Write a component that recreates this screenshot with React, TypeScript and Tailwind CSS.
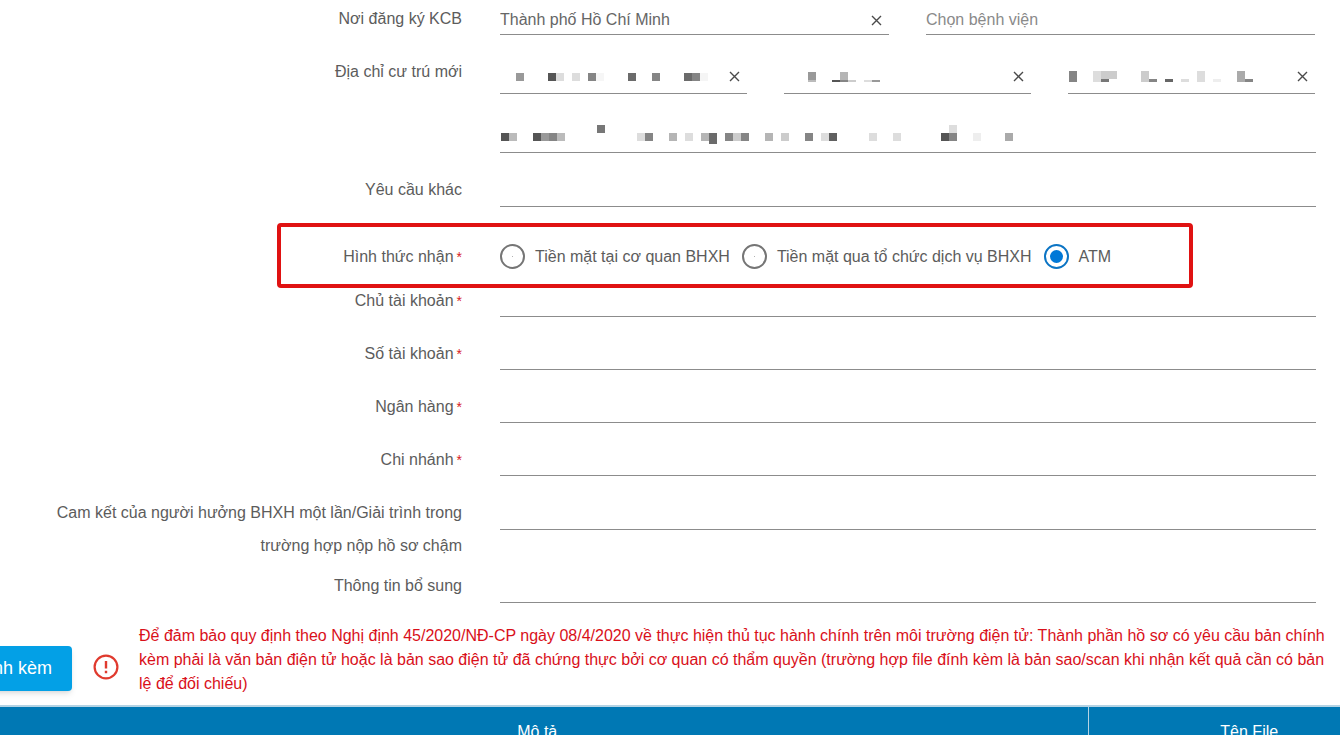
import React, { useState } from "react";

type Cell = [x: number, y: number, height: number, color: string];

// masked personal data, one block per cell
const provinceMask: Cell[] = [
  [16, 18, 8, "#999"],
  [48, 18, 8, "#555"],
  [56, 18, 8, "#ddd"],
  [72, 18, 8, "#ddd"],
  [88, 18, 8, "#858585"],
  [96, 18, 8, "#f6f6f6"],
  [128, 18, 8, "#6b6b6b"],
  [152, 18, 8, "#858585"],
  [184, 18, 8, "#6b6b6b"],
  [192, 18, 8, "#858585"],
  [200, 18, 8, "#f5f5f5"],
];

const districtMask: Cell[] = [
  [24, 17, 8, "#999"],
  [24, 25, 2, "#bbb"],
  [56, 17, 8, "#b5b5b5"],
  [48, 25, 2, "#555"],
  [56, 25, 2, "#858585"],
  [64, 25, 2, "#ccc"],
  [80, 25, 2, "#ddd"],
  [88, 25, 2, "#999"],
];

const wardMask: Cell[] = [
  [1, 16, 11, "#858585"],
  [25, 16, 11, "#ddd"],
  [33, 16, 8, "#ccc"],
  [33, 24, 3, "#777"],
  [41, 16, 8, "#ccc"],
  [73, 16, 11, "#ccc"],
  [81, 24, 3, "#858585"],
  [97, 24, 3, "#666"],
  [113, 24, 3, "#ddd"],
  [129, 16, 11, "#ddd"],
  [145, 24, 3, "#eee"],
  [169, 16, 11, "#aaa"],
  [177, 24, 3, "#858585"],
];

const streetMask: Cell[] = [
  [1, 19, 8, "#555"],
  [9, 19, 8, "#bbb"],
  [33, 19, 8, "#555"],
  [41, 19, 8, "#999"],
  [49, 19, 8, "#858585"],
  [57, 19, 8, "#bbb"],
  [97, 11, 8, "#777"],
  [137, 19, 8, "#ddd"],
  [145, 19, 8, "#858585"],
  [169, 19, 8, "#b5b5b5"],
  [185, 19, 8, "#ddd"],
  [201, 19, 8, "#b5b5b5"],
  [209, 19, 11, "#6b6b6b"],
  [225, 19, 8, "#858585"],
  [233, 19, 8, "#ccc"],
  [241, 19, 8, "#858585"],
  [265, 19, 8, "#b5b5b5"],
  [281, 19, 8, "#ccc"],
  [305, 19, 8, "#858585"],
  [321, 19, 8, "#ddd"],
  [329, 19, 8, "#606060"],
  [369, 19, 8, "#ddd"],
  [393, 19, 8, "#ddd"],
  [441, 19, 8, "#555"],
  [449, 19, 8, "#858585"],
  [449, 11, 8, "#ddd"],
  [473, 19, 8, "#eee"],
  [505, 19, 8, "#aaa"],
];

const paymentMethods = [
  { id: "cash-office", label: "Tiền mặt tại cơ quan BHXH" },
  { id: "cash-service", label: "Tiền mặt qua tổ chức dịch vụ BHXH" },
  { id: "atm", label: "ATM" },
];

const Mask = ({ cells }: { cells: Cell[] }) => (
  <svg
    className="pointer-events-none absolute top-0 left-0"
    width="520"
    height="38"
    shapeRendering="crispEdges"
    aria-hidden="true"
  >
    {cells.map(([x, y, height, color]) => (
      <rect key={`${x}-${y}`} x={x} y={y} width="8" height={height} fill={color} />
    ))}
  </svg>
);

const ClearButton = () => (
  <button
    type="button"
    aria-label="Xóa"
    className="flex w-[26px] shrink-0 cursor-pointer items-center justify-center pt-1"
  >
    <svg width="11" height="11" viewBox="0 0 11 11" fill="none">
      <path d="M1 1L10 10M10 1L1 10" stroke="#4a4a4a" strokeWidth="1.4" />
    </svg>
  </button>
);

interface FieldProps {
  id: string;
  name?: string;
  value?: string;
  placeholder?: string;
  clearable?: boolean;
  mask?: Cell[];
  className?: string;
}

const Field = ({
  id,
  name,
  value,
  placeholder,
  clearable,
  mask,
  className = "h-[33px]",
}: FieldProps) => (
  <div className={`relative flex min-w-0 border-b border-[#8c8c8c] ${className}`}>
    <input
      id={id}
      type="text"
      aria-label={name}
      defaultValue={value}
      placeholder={placeholder}
      className="w-full min-w-0 bg-transparent pt-1 text-[#666] outline-none placeholder:text-[#8a8a8a]"
    />
    {mask && <Mask cells={mask} />}
    {clearable && <ClearButton />}
  </div>
);

interface RowProps {
  label: string;
  htmlFor?: string;
  required?: boolean;
  className?: string;
  children: React.ReactNode;
}

const Row = ({ label, htmlFor, required, className = "mt-5", children }: RowProps) => (
  <div
    className={`grid grid-cols-[minmax(0,462fr)_minmax(0,816fr)] items-start gap-x-[38px] pr-6 ${className}`}
  >
    <label
      id={htmlFor ? undefined : "payment-label"}
      htmlFor={htmlFor}
      className="pl-12 text-right leading-[33px]"
    >
      {label}
      {required && <span className="ml-[3px] text-sm text-[#d8201c]">*</span>}
    </label>
    {children}
  </div>
);

const PaymentOptions = () => {
  const [method, setMethod] = useState("atm");

  return (
    <div
      role="radiogroup"
      aria-labelledby="payment-label"
      className="flex h-[33px] items-center gap-3 whitespace-nowrap"
    >
      {paymentMethods.map((item) => (
        <label key={item.id} className="flex cursor-pointer items-center gap-[10px]">
          <input
            type="radio"
            name="payment"
            value={item.id}
            checked={method === item.id}
            onChange={() => setMethod(item.id)}
            className="grid size-[25px] shrink-0 appearance-none place-content-center rounded-full border-2 border-[#757575] before:size-px before:rounded-full before:bg-[#999] checked:border-[#0b74c4] checked:before:size-[13px] checked:before:bg-[#0078d7]"
          />
          {item.label}
        </label>
      ))}
    </div>
  );
};

const Notice = () => (
  <div className="flex items-start overflow-hidden pt-[21px] pb-[9px]">
    <div className="flex w-[139px] shrink-0 items-center pt-[22px]">
      <div className="flex w-[72px] justify-end">
        <button
          type="button"
          className="h-[45px] shrink-0 cursor-pointer rounded bg-[#03a0e6] px-5 pb-0.5 text-lg text-white shadow-md"
        >
          Đính kèm
        </button>
      </div>
      <svg className="mb-1 ml-[21px]" width="26" height="26" viewBox="0 0 26 26" fill="none">
        <circle cx="13" cy="13" r="11.4" stroke="#e03a2e" strokeWidth="2.2" />
        <path d="M13 7V14.5M13 16.8V19.2" stroke="#e03a2e" strokeWidth="2.4" />
      </svg>
    </div>
    <p className="leading-6 whitespace-nowrap text-[#d9101a]">
      Để đảm bảo quy định theo Nghị định 45/2020/NĐ-CP ngày 08/4/2020 về thực hiện thủ tục hành
      chính trên môi trường điện tử: Thành phần hồ sơ có yêu cầu bản chính
      <br />
      kèm phải là văn bản điện tử hoặc là bản sao điện tử đã chứng thực bởi cơ quan có thẩm quyền
      (trường hợp file đính kèm là bản sao/scan khi nhận kết quả cần có bản
      <br />
      lệ để đối chiếu)
    </p>
  </div>
);

const App = () => {
  return (
    <div className="h-screen overflow-hidden bg-white font-['Liberation_Sans',Arial,sans-serif] text-base text-[#5c5c5c]">
      <form onSubmit={(e) => e.preventDefault()}>
        <Row label="Nơi đăng ký KCB" htmlFor="kcb" className="pt-0.5">
          <div className="grid grid-cols-2 gap-[37px] pr-px">
            <Field id="kcb" value="Thành phố Hồ Chí Minh" clearable />
            <Field id="hospital" name="Bệnh viện" placeholder="Chọn bệnh viện" />
          </div>
        </Row>

        <Row label="Địa chỉ cư trú mới" htmlFor="province">
          <div className="flex flex-col gap-5">
            <div className="grid grid-cols-3 gap-[37px] pr-px">
              <Field id="province" mask={provinceMask} clearable className="h-[39px]" />
              <Field
                id="district"
                name="Quận huyện"
                mask={districtMask}
                clearable
                className="h-[39px]"
              />
              <Field id="ward" name="Phường xã" mask={wardMask} clearable className="h-[39px]" />
            </div>
            <Field id="street" name="Số nhà, đường" mask={streetMask} className="h-[39px]" />
          </div>
        </Row>

        <Row label="Yêu cầu khác" htmlFor="other">
          <Field id="other" className="h-[34px]" />
        </Row>

        <div className="relative">
          <Row label="Hình thức nhận" required className="pt-[33px] pb-[11px]">
            <PaymentOptions />
          </Row>
          <div className="pointer-events-none absolute top-4 right-[11%] -bottom-1 left-[277px] rounded border-4 border-[#e01212]" />
        </div>

        <Row label="Chủ tài khoản" htmlFor="owner" required className="">
          <Field id="owner" />
        </Row>
        <Row label="Số tài khoản" htmlFor="account" required>
          <Field id="account" />
        </Row>
        <Row label="Ngân hàng" htmlFor="bank" required>
          <Field id="bank" />
        </Row>
        <Row label="Chi nhánh" htmlFor="branch" required>
          <Field id="branch" />
        </Row>
        <Row
          label="Cam kết của người hưởng BHXH một lần/Giải trình trong trường hợp nộp hồ sơ chậm"
          htmlFor="commitment"
        >
          <Field id="commitment" className="h-[34px]" />
        </Row>
        <Row label="Thông tin bổ sung" htmlFor="extra" className="mt-[7px]">
          <Field id="extra" className="h-[34px]" />
        </Row>
      </form>

      <Notice />

      <table className="-ml-[13px] w-[calc(100%+83px)] table-fixed bg-[#0078b4] text-white">
        <thead>
          <tr className="h-[50px] border-t-2 border-[#b4d3e4]">
            <th className="w-[1101px] border-r border-[#b4d3e4] font-normal">Mô tả</th>
            <th className="font-normal">Tên File</th>
          </tr>
        </thead>
      </table>
    </div>
  );
};

export default App;
